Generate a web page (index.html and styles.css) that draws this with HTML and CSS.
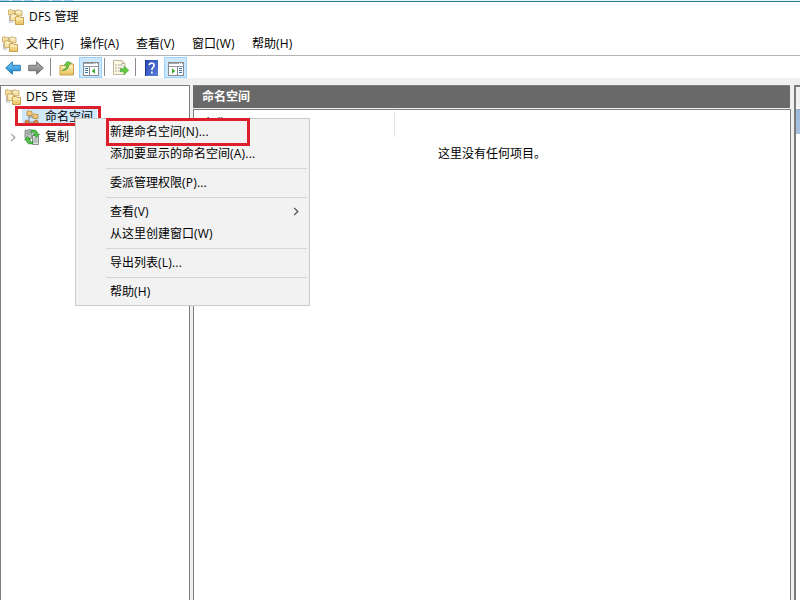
FILE: index.html
```html
<!DOCTYPE html>
<html lang="zh-CN">
<head>
<meta charset="utf-8">
<title>DFS 管理</title>
<link rel="stylesheet" href="styles.css">
</head>
<body>
<svg width="0" height="0" class="defs">
  <defs>
    <linearGradient id="gold" x1="0" y1="0" x2="0" y2="1"><stop offset="0" stop-color="#fdf0bd"/><stop offset="1" stop-color="#e8c25c"/></linearGradient>
    <linearGradient id="blue" x1="0" y1="0" x2="0" y2="1"><stop offset="0" stop-color="#7fd0fa"/><stop offset="1" stop-color="#1580d0"/></linearGradient>
    <linearGradient id="grey" x1="0" y1="0" x2="0" y2="1"><stop offset="0" stop-color="#b8b8b8"/><stop offset="1" stop-color="#777"/></linearGradient>
    <linearGradient id="help" x1="0" y1="0" x2="1" y2="1"><stop offset="0" stop-color="#2848b4"/><stop offset="1" stop-color="#5b7ddc"/></linearGradient>
    <symbol id="dfs" viewBox="0 0 16 16">
      <path d="M.5 6V1.2l2.5-.7 1 1h2.5V6z" fill="#f3dfa0" stroke="#c5a562" stroke-width=".8"/>
      <path d="M7.5 6.5v-5l3-.7 1 1H14v5z" fill="#f3dfa0" stroke="#c5a562" stroke-width=".8"/>
      <path d="M8.2 3h5" stroke="#fffbe8"/>
      <path d="M2.5 11.5V5.2l3-.7 1 1H9v6z" fill="#f5e3a8" stroke="#c5a562" stroke-width=".8"/>
      <path d="M3.2 7h5" stroke="#fffbe8"/>
      <path d="M1.5 7v6h4" fill="none" stroke="#9a9a9a" stroke-width=".7"/>
      <path d="M7.5 15.5V8l3.5-.8 1 1.3h3.5v7z" fill="url(#gold)" stroke="#c59a3e" stroke-width=".9"/>
      <path d="M8.2 10h6.8" stroke="#fff8d8" stroke-width=".8"/>
    </symbol>
    <symbol id="mmc" viewBox="0 0 16 14"><rect x=".5" y=".5" width="15" height="13" fill="#fff" stroke="#858b91"/><path d="M1 1.5h14" stroke="#a4a9ae"/><path d="M1 4.5h14" stroke="#8f959b" stroke-width="1"/><path d="M11 1.5h1M13 1.5h1" stroke="#fff"/></symbol>
  </defs>
</svg>
<div class="window">
  <div class="backdrop"><i></i><i></i><i></i><i></i><i></i><i></i></div>
  <header class="title"><svg class="i16"><use href="#dfs"/></svg><span>DFS 管理</span></header>
  <nav class="menubar">
    <svg class="i16"><use href="#dfs"/></svg>
    <span>文件<b>(F)</b></span><span>操作<b>(A)</b></span><span>查看<b>(V)</b></span><span>窗口<b>(W)</b></span><span>帮助<b>(H)</b></span>
  </nav>
  <div class="toolbar">
    <svg class="arrow" viewBox="0 0 16 14"><path d="M.7 7 7.3.8v3.5h8v5.4h-8v3.5z" fill="url(#blue)" stroke="#2377b0"/></svg>
    <svg class="arrow fwd" viewBox="0 0 16 14"><path d="M15.3 7 8.7.8v3.5h-8v5.4h8v3.5z" fill="url(#grey)" stroke="#707070"/></svg>
    <i class="sep s1"></i>
    <svg class="up" viewBox="0 0 16 16"><path d="M1 5.5h5.5L8 4h6.5v11H1z" fill="url(#gold)" stroke="#c7a04c"/><path d="M2 7.2h12" stroke="#fff2c0"/><path d="M3 10.5C6.500 9.500 7.500 7.500 7.300 5L5.300 5.200 8.200 1.400 12.500 3l-2.700 1.500c.2 3.500-2.300 6.200-6.800 6z" fill="#6ccb3c" stroke="#379022" stroke-width=".6"/></svg>
    <span class="tool t1"><svg width="16" height="14" viewBox="0 0 16 14"><use href="#mmc"/><path d="M6.500 5v8.500" stroke="#858b91"/><path d="M2 6.500h3M2 8.500h3M2 10.500h3" stroke="#3976ad" stroke-width="1"/><path d="M12 6.300v5.400L8.800 9z" fill="#37a62a"/></svg></span>
    <i class="sep s2"></i>
    <svg class="export" viewBox="0 0 16 16"><path d="M.5 .5h8.500l3 3v11h-11.500z" fill="#fff9e3" stroke="#bdb59a"/><path d="M9 .5v3h3" fill="#eee6c8" stroke="#bdb59a"/><path d="M2.500 5h1M2.500 8h1M2.500 11h1" stroke="#555"/><path d="M5 5h5M5 8h4M5 11h4" stroke="#a8a8b8"/><path d="M7.500 8.800h3.500V6l4.800 4.300L11 14.500v-2.700H7.500z" fill="#62c944" stroke="#3ca12c" stroke-width=".6"/></svg>
    <i class="sep s3"></i>
    <svg class="help" viewBox="0 0 13 16"><rect width="13" height="16" fill="url(#help)"/><path d="M.5 0v16" stroke="#1b3184" stroke-width="1"/><path d="M4.300 5.300C4.400 2.300 9.200 2.300 9.100 5.300 9.100 7.200 6.900 7.500 6.900 10M6.900 11.600v1.800" fill="none" stroke="#fff" stroke-width="1.700"/></svg>
    <span class="tool t2"><svg width="16" height="14" viewBox="0 0 16 14"><use href="#mmc"/><path d="M9.500 5v8.500" stroke="#858b91"/><path d="M11 6.500h3M11 8.500h3M11 10.500h3" stroke="#3976ad"/><path d="M4 6.300v5.400L7.200 9z" fill="#37a62a"/></svg></span>
  </div>
  <main class="panes">
    <section class="tree">
      <div class="row root"><svg class="i16"><use href="#dfs"/></svg><span>DFS 管理</span></div>
      <div class="row ns"><div class="picked"><svg class="i16" viewBox="0 0 16 16"><path d="M5 5v8h5M5 8h5" fill="none" stroke="#777" stroke-width=".9"/><path d="M3 6.500v-4l2-1 1 1h2v4z" fill="#f0c878" stroke="#b78639" stroke-width=".8"/><path d="M9 9.500v-4l2-1 1 1h2v4z" fill="#f0c878" stroke="#b78639" stroke-width=".8"/><path d="M1 15v-3l2-1 2 1v3zM10 15v-3l2-1 2 1v3z" fill="#db8e48" stroke="#9b6a38" stroke-width=".7"/></svg><span>命名空间</span></div></div>
      <div class="row rep"><svg class="chev" viewBox="0 0 6 10"><path d="m1 1 4 4-4 4" fill="none" stroke="#a0a0a0" stroke-width="1.400"/></svg><svg class="i16" viewBox="0 0 16 16"><path d="M1 1.500l5-1 2 1V9l-5 1-2-1z" fill="#b9c4bf" stroke="#68756c" stroke-width=".8"/><path d="M8.500 6.500h6v9h-6z" fill="#e3e8e6" stroke="#68756c" stroke-width=".8"/><path d="M9.500 9h4M9.500 11h4M9.500 13h4M2.500 3h4M2.500 5h4" stroke="#78847b" stroke-width=".8"/><path d="M7 1.500c4.500-1.500 6.500.5 6.500 3.500h2l-3 3.500-3.500-3.500h2c0-1.500-1.500-2.200-4-1.500zM9 14.500c-4.500 1.500-6.500-.5-6.500-3.500h-2l3-3.500L7 11H5c0 1.500 1.500 2.200 4 1.500z" fill="#4fc442" stroke="#237a2c" stroke-width=".6"/></svg><span>复制</span></div>
    </section>
    <section class="content">
      <h1>命名空间</h1>
      <div class="list"><div class="cols"><span>名称</span></div><p>这里没有任何项目。</p></div>
    </section>
    <aside class="actions"><div class="ahead"></div><div class="agroup"></div></aside>
  </main>
</div>
<i class="mark m1"></i>
<div class="popup">
  <div class="item">新建命名空间<b>(N)...</b></div>
  <div class="item">添加要显示的命名空间<b>(A)...</b></div>
  <hr>
  <div class="item">委派管理权限<b>(P)...</b></div>
  <hr>
  <div class="item">查看<b>(V)</b><svg class="sub" viewBox="0 0 6 10"><path d="m1 1 4 4-4 4" fill="none" stroke="#444" stroke-width="1.200"/></svg></div>
  <div class="item">从这里创建窗口<b>(W)</b></div>
  <hr>
  <div class="item">导出列表<b>(L)...</b></div>
  <hr>
  <div class="item">帮助<b>(H)</b></div>
</div>
<i class="mark m2"></i>
</body>
</html>
```
FILE: styles.css
```css
* { box-sizing: border-box; }
body { margin: 0; width: 800px; height: 600px; overflow: hidden; position: relative; background: #fff; color: #000; font: 12px/20px "Open Sans", "Noto Sans CJK SC", sans-serif; }
b { font-weight: normal; letter-spacing: .2px; }
svg { display: block; flex: none; }
.defs { position: absolute; }
.i16 { width: 16px; height: 16px; }
.window { display: flex; flex-direction: column; height: 600px; }
.backdrop { height: 2px; flex: none; border-bottom: 1px solid #2b7f9f; background: #e4f4fa; display: flex; gap: 3px; }
.backdrop i { width: 9px; background: #a5d0ee; }
.backdrop i:nth-child(3) { margin-right: 4px; }
.title { height: 30px; flex: none; display: flex; align-items: center; padding-left: 8px; gap: 5px; }
.title span, .root span { letter-spacing: .2px; }
.menubar { height: 24px; flex: none; display: flex; align-items: center; padding-left: 2px; border-bottom: 1px solid #b4b4b4; }
.menubar .i16 { margin-right: 8px; }
.menubar span { width: 54px; flex: none; white-space: nowrap; }
.menubar span:nth-of-type(2), .menubar span:nth-of-type(3) { width: 56px; }
.menubar span:nth-of-type(4) { width: 60px; }
.toolbar { height: 22px; flex: none; display: flex; align-items: center; padding-left: 5px; }
.arrow { width: 16px; height: 14px; margin-top: 2px; }
.fwd { margin-left: 7px; }
.sep { width: 1px; height: 18px; background: #8b8b8b; flex: none; }
.s1 { margin-left: 6px; }
.up { width: 16px; height: 16px; margin: 1px 4px 0 8px; }
.tool { width: 23px; height: 21px; background: #cce8ff; border: 1px solid #99d1ff; display: flex; align-items: center; justify-content: center; padding-top: 3px; flex: none; }
.s2 { margin-left: 2px; }
.export { width: 16px; height: 16px; margin: 1px 6px 0 8px; }
.help { width: 13px; height: 16px; margin: 1px 6px 0 9px; }
.panes { flex: 1; background: #f0f0f0; padding-top: 7px; display: flex; min-height: 0; }
.tree { width: 190px; border: 1px solid #7b7f85; border-bottom: 0; background: #fff; padding-top: 1px; }
.row { height: 20px; display: flex; align-items: center; }
.root { padding-left: 4px; gap: 5px; }
.ns { padding-left: 21px; }
.picked { background: #d0e8fb; width: 75px; height: 18px; line-height: 18px; padding-left: 2px; display: flex; align-items: center; gap: 5px; white-space: nowrap; }
.rep { padding-left: 9px; }
.chev { width: 6px; height: 9px; margin-right: 8px; }
.rep span { margin-left: 5px; }
.content { width: 598px; margin-left: 3px; display: flex; flex-direction: column; }
h1 { margin: 0 1px 1px 0; height: 23px; flex: none; background: #696969; border-top: 1px solid #7f7f7f; color: #fff; font-size: 12px; line-height: 22px; font-weight: 700; padding-left: 9px; }
.list { flex: 1; background: #fff; border: 1px solid #7b7f85; border-bottom: 0; }
.cols { width: 201px; height: 26px; margin-top: 1px; border-right: 1px solid #e2e2e2; padding-left: 9px; line-height: 26px; }
.list p { margin: 7px 0 0; text-align: center; }
.actions { width: 6px; margin-left: 3px; border-left: 2px solid #7b7b7b; border-top: 2px solid #7b7b7b; background: #fff; }
.ahead { height: 20px; background: #f0f0f0; }
.agroup { margin-top: 2px; height: 25px; background: linear-gradient(#9db9da, #a9c4e2); border-top: 1px solid #9aa8b8; }
.popup { position: absolute; left: 75px; top: 118px; width: 235px; height: 188px; background: #f2f2f2; border: 1px solid #ccc; padding: 2px 2px 0 30px; }
.item { height: 22px; line-height: 22px; padding-left: 4px; display: flex; align-items: center; white-space: nowrap; }
.sub { width: 6px; height: 9px; margin: 0 8px 2px auto; }
hr { margin: 3px 0; height: 1px; border: 0; background: #d5d5d5; }
.mark { position: absolute; border: 3px solid #dc1f2b; }
.m1 { left: 15px; top: 106px; width: 86px; height: 20px; }
.m2 { left: 106px; top: 118px; width: 144px; height: 28px; }
```
